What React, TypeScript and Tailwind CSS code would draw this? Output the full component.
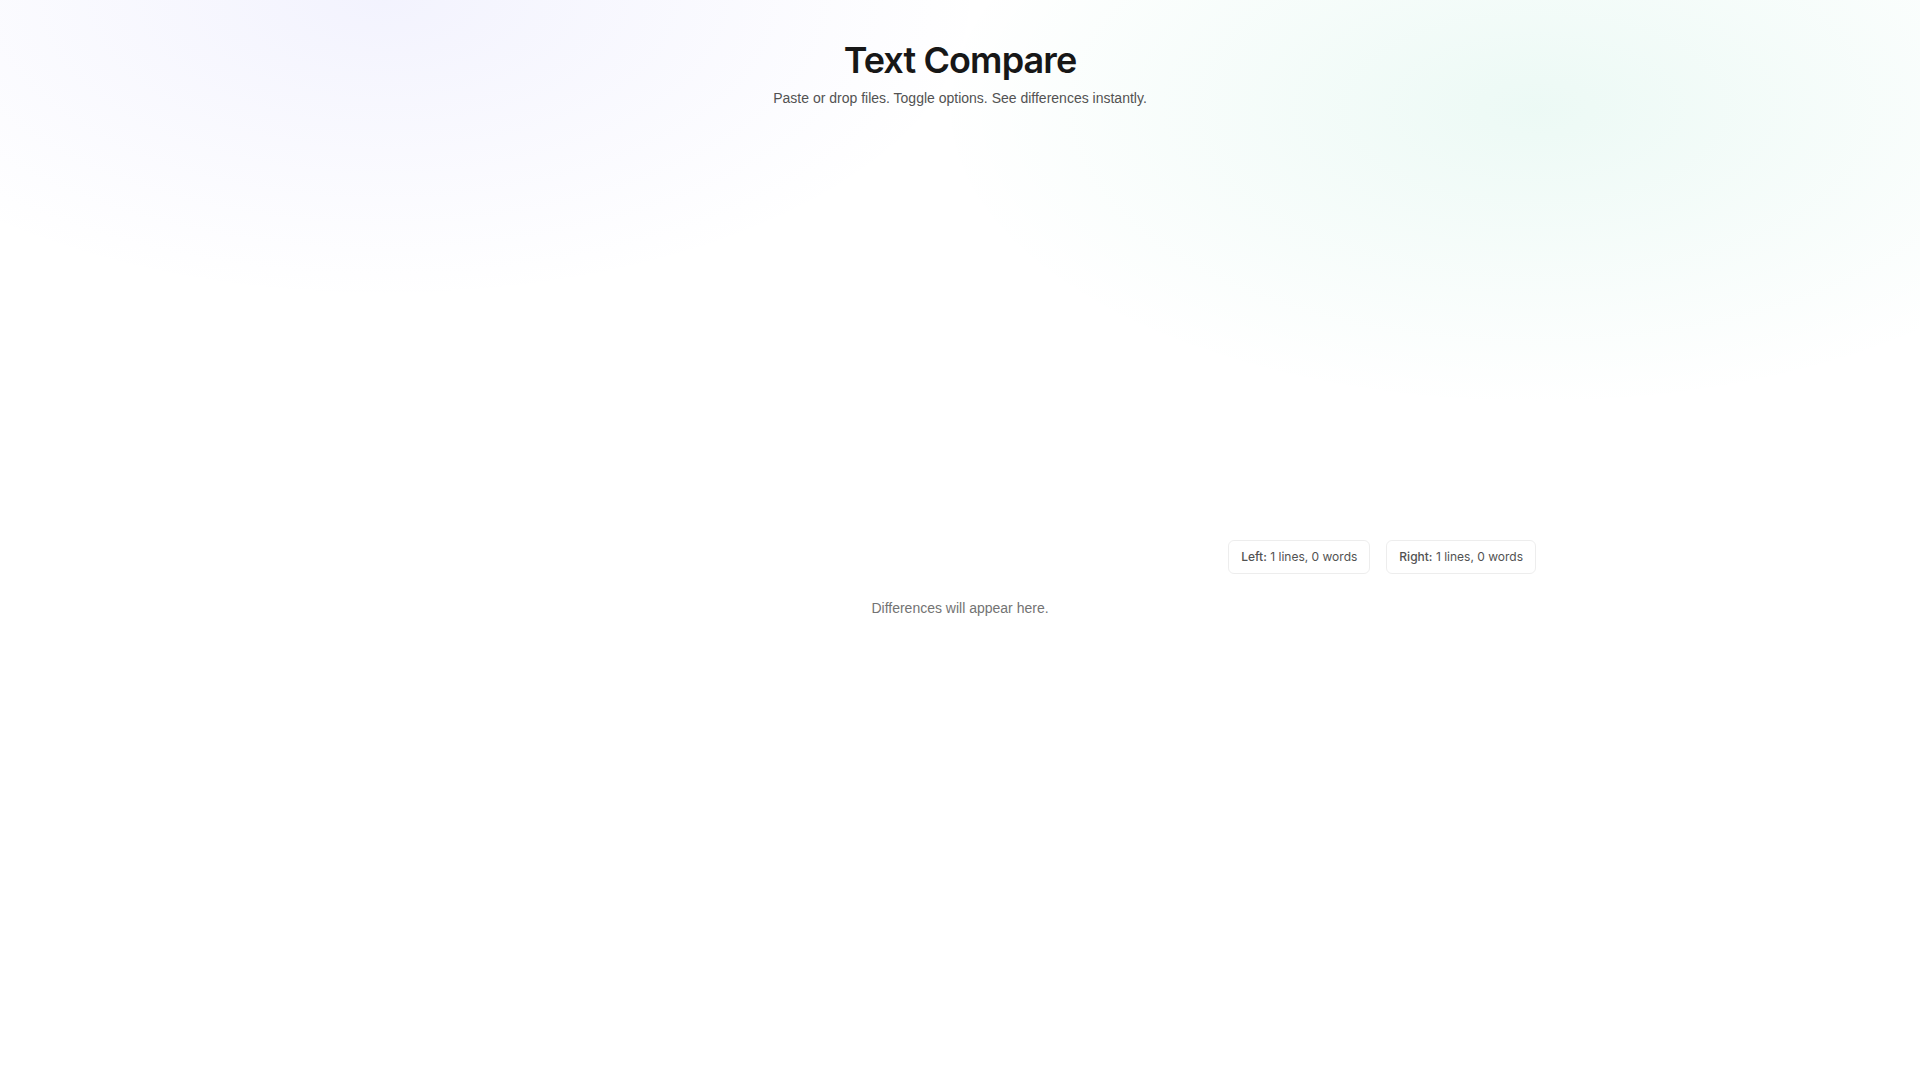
type Counter = { label: string; lines: number; words: number };

const counters: Counter[] = [
  { label: "Left:", lines: 1, words: 0 },
  { label: "Right:", lines: 1, words: 0 },
];

function Header() {
  return (
    <header className="text-center">
      <h1 className="text-4xl font-semibold tracking-tight text-neutral-900">Text Compare</h1>
      <p className="mt-2 font-['Liberation_Sans',sans-serif] text-sm text-neutral-600">
        Paste or drop files. Toggle options. See differences instantly.
      </p>
    </header>
  );
}

function CounterBadge({ label, lines, words }: Counter) {
  return (
    <div className="rounded-md border border-neutral-200/70 px-3 py-2 text-xs text-neutral-600">
      <span className="font-medium">{label}</span> {lines} lines, {words} words
    </div>
  );
}

export default function App() {
  return (
    <div className="min-h-screen bg-white bg-[radial-gradient(600px_300px_at_20%_0%,rgba(99,102,241,0.08),transparent),radial-gradient(600px_300px_at_80%_108px,rgba(16,185,129,0.08),transparent)] font-['Inter',sans-serif]">
      <main className="mx-auto max-w-6xl pt-10">
        <Header />
        <section className="mt-108 flex flex-wrap justify-end gap-4">
          {counters.map((counter) => (
            <CounterBadge key={counter.label} {...counter} />
          ))}
        </section>
        <p className="mt-6 text-center font-['Liberation_Sans',sans-serif] text-sm text-neutral-500">
          Differences will appear here.
        </p>
      </main>
    </div>
  );
}
